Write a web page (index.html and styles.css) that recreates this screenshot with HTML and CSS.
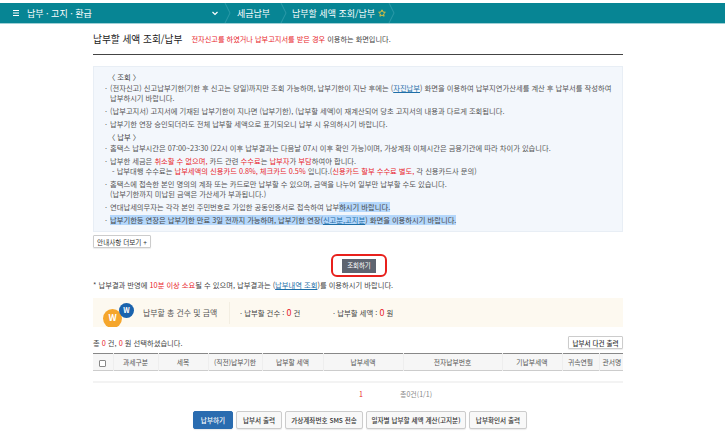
FILE: index.html
```html
<!DOCTYPE html>
<html lang="ko">
<head>
    <meta charset="UTF-8">
    <title>납부할 세액 조회/납부</title>
    <link rel="stylesheet" href="styles.css">
</head>
<body>
    <div class="topbar">
        <div class="crumb crumb-first">
            <svg class="menu-icon" width="6" height="6" viewBox="0 0 6 6"><path d="M0 .5h6M0 3h6M0 5.5h6" stroke="#fff" stroke-width="1"/></svg>
            <span>납부 · 고지 · 환급</span>
            <svg class="chev" width="6" height="5" viewBox="0 0 6 5"><path d="M.5 1l2.500 2.500L5.500 1" fill="none" stroke="#fff" stroke-width="1.2"/></svg>
        </div>
        <svg class="sep" width="7" height="20" viewBox="0 0 7 20"><path d="M1 0l5 10-5 10" fill="none" stroke="#2c9aa8" stroke-width="1"/></svg>
        <div class="crumb crumb-second">세금납부</div>
        <svg class="sep" width="7" height="20" viewBox="0 0 7 20"><path d="M1 0l5 10-5 10" fill="none" stroke="#2c9aa8" stroke-width="1"/></svg>
        <div class="crumb crumb-third">
            <span>납부할 세액 조회/납부</span>
            <svg class="star" width="8" height="8" viewBox="0 0 8 8"><path d="M4 .8l1 2.200 2.300.3-1.700 1.600.5 2.300L4 6.100 1.900 7.200l.5-2.300L.7 3.300 3 3z" fill="none" stroke="#e0c040" stroke-width="1"/></svg>
        </div>
        <svg class="sep" width="7" height="20" viewBox="0 0 7 20"><path d="M1 0l5 10-5 10" fill="none" stroke="#2c9aa8" stroke-width="1"/></svg>
    </div>

    <div class="content">
        <div class="title-row">
            <h1>납부할 세액 조회/납부</h1>
            <p><span class="red">전자신고를 하였거나 납부고지서를 받은 경우</span> 이용하는 화면입니다.</p>
        </div>

        <div class="notice">
            <div class="notice-head">〈 조회 〉</div>
            <ul>
                <li>(전자신고) 신고납부기한(기한 후 신고는 당일)까지만 조회 가능하며, 납부기한이 지난 후에는 (<a class="link">자진납부</a>) 화면을 이용하여 납부지연가산세를 계산 후 납부서를 작성하여<br>납부하시기 바랍니다.</li>
                <li>(납부고지서) 고지서에 기재된 납부기한이 지나면 (납부기한), (납부할 세액)이 재계산되어 당초 고지서의 내용과 다르게 조회됩니다.</li>
                <li>납부기한 연장 승인되더라도 전체 납부할 세액으로 표기되오니 납부 시 유의하시기 바랍니다.</li>
            </ul>
            <div class="notice-head">〈 납부 〉</div>
            <ul>
                <li>홈택스 납부시간은 07:00~23:30 (22시 이후 납부결과는 다음날 07시 이후 확인 가능)이며, 가상계좌 이체시간은 금융기관에 따라 차이가 있습니다.</li>
                <li>납부한 세금은 <span class="red">취소할 수 없으며,</span> 카드 관련 <span class="red">수수료</span>는 <span class="red">납부자</span>가 <span class="red">부담</span>하여야 합니다.<br>&nbsp;- 납부대행 수수료는 <span class="red">납부세액의 신용카드 0.8%, 체크카드 0.5%</span> 입니다.(<span class="red">신용카드 할부 수수료 별도,</span> 각 신용카드사 문의)</li>
                <li>홈택스에 접속한 본인 명의의 계좌 또는 카드로만 납부할 수 있으며, 금액을 나누어 일부만 납부할 수도 있습니다.<br>(납부기한까지 미납된 금액은 가산세가 부과됩니다.)</li>
                <li>연대납세의무자는 각각 본인 주민번호로 가입한 공동인증서로 접속하여 납부<mark>하시기 바랍니다.</mark></li>
                <li><mark>납부기한등 연장은 납부기한 만료 3일 전까지 가능하며, 납부기한 연장(<a class="link">신고분,고지분</a>) 화면을 이용하시기 바랍니다.</mark></li>
            </ul>
        </div>

        <button class="btn btn-more">안내사항 더보기 +</button>

        <div class="search-row">
            <div class="search-ring"><button class="btn-dark">조회하기</button></div>
        </div>

        <p class="result-note">* 납부결과 반영에 <span class="red">10분 이상 소요</span>될 수 있으며, 납부결과는 (<a class="link">납부내역 조회</a>)를 이용하시기 바랍니다.</p>

        <div class="summary">
            <div class="logo">
                <span class="logo-big">W</span>
                <span class="logo-small">W</span>
            </div>
            <div class="summary-title">납부할 총 건수 및 금액</div>
            <div class="summary-item summary-count">· 납부할 건수 : <b class="red">0</b> 건</div>
            <div class="summary-item summary-amount">· 납부할 세액 : <b class="red">0</b> 원</div>
        </div>

        <div class="select-row">
            <span>총 <span class="red">0</span> 건, <span class="red">0</span> 원 선택하셨습니다.</span>
            <button class="btn btn-print">납부서 다건 출력</button>
        </div>

        <table class="tax-table">
            <thead>
                <tr>
                    <th class="col-check"><span class="checkbox"></span></th>
                    <th class="col-type">과세구분</th>
                    <th class="col-item">세목</th>
                    <th class="col-date">(직전)납부기한</th>
                    <th class="col-due">납부할 세액</th>
                    <th class="col-tax">납부세액</th>
                    <th class="col-no">전자납부번호</th>
                    <th class="col-paid">기납부세액</th>
                    <th class="col-year">귀속연월</th>
                    <th class="col-office">관서명</th>
                </tr>
            </thead>
        </table>
        <div class="table-empty"></div>

        <div class="paging">
            <a class="page-no">1</a>
            <span class="page-total">총0건(1/1)</span>
        </div>

        <div class="actions">
            <button class="btn btn-action btn-primary">납부하기</button>
            <button class="btn btn-action btn-w46">납부서 출력</button>
            <button class="btn btn-action btn-w78">가상계좌번호 SMS 전송</button>
            <button class="btn btn-action btn-w100">일자별 납부할 세액 계산(고지분)</button>
            <button class="btn btn-action btn-w58">납부확인서 출력</button>
        </div>
    </div>
</body>
</html>
```

FILE: styles.css
```css
* {
    margin: 0;
    padding: 0;
    box-sizing: border-box;
}

body {
    width: 725px;
    height: 434px;
    overflow: hidden;
    background: #fff;
    font-family: "Noto Sans CJK KR", "Noto Sans", sans-serif;
    color: #444;
    font-size: 7px;
    padding-top: 3px;
}

.red {
    color: #e8262c;
}

.link {
    color: #1f6fa8;
    text-decoration: underline;
}

.topbar {
    display: flex;
    align-items: center;
    height: 21px;
    background: #078594;
    border-bottom: 1px solid #9fd0d6;
    color: #fff;
    font-size: 9px;
}

.crumb {
    display: flex;
    align-items: center;
    white-space: nowrap;
}

.crumb-first {
    width: 224px;
    padding-left: 13px;
}

.menu-icon {
    margin-right: 8px;
}

.chev {
    margin-left: auto;
    margin-right: 6px;
}

.sep {
    flex: none;
}

.crumb-second {
    width: 49px;
    padding-left: 6px;
}

.crumb-third {
    width: 101px;
    padding-left: 5px;
    gap: 3px;
}

.content {
    width: 530px;
    margin-left: 93px;
}

.title-row {
    display: flex;
    align-items: center;
    height: 31px;
    border-bottom: 1px solid #444;
    gap: 9px;
    white-space: nowrap;
}

.title-row h1 {
    font-size: 9.7px;
    font-weight: 400;
    color: #222;
}

.title-row p {
    font-size: 7.2px;
}

.notice {
    margin-top: 11px;
    height: 166px;
    background: #f3f7fc;
    border: 1px solid #e8eef5;
    padding: 5px 6px 0 11px;
    font-size: 7.3px;
    line-height: 10px;
    color: #555;
}

.notice-head {
    padding: 0 3px;
    margin-bottom: 1px;
    color: #444;
}

.notice ul {
    list-style: none;
    margin-bottom: 2px;
}

.notice li {
    padding-left: 5px;
    margin-bottom: 3px;
    position: relative;
    white-space: nowrap;
}

.notice li::before {
    content: "·";
    position: absolute;
    left: 0;
}

mark {
    background: #b4d7fb;
    color: #444;
}

.btn {
    background: #fff;
    border: 1px solid #ccc;
    color: #333;
    font-family: inherit;
    font-size: 6.6px;
    border-radius: 1px;
    box-shadow: 0 1px 1px rgba(0,0,0,0.08);
    white-space: nowrap;
}

.btn-more {
    display: block;
    width: 58px;
    height: 13px;
    margin-top: 3px;
}

.search-row {
    display: flex;
    justify-content: center;
    margin-top: 6px;
    padding-left: 2px;
}

.search-ring {
    display: flex;
    align-items: center;
    justify-content: center;
    width: 56px;
    height: 23px;
    border: 2px solid #e8201c;
    border-radius: 6px;
}

.btn-dark {
    width: 34px;
    height: 14px;
    background: #5e6470;
    border: none;
    color: #fff;
    font-family: inherit;
    font-size: 6.4px;
}

.result-note {
    margin-top: 3px;
    font-size: 7.3px;
    line-height: 10px;
    white-space: nowrap;
}

.summary {
    display: flex;
    align-items: center;
    height: 29px;
    margin-top: 8px;
    background: #fdf9f0;
}

.logo {
    width: 50px;
    height: 29px;
    position: relative;
    overflow: hidden;
    flex: none;
}

.logo-big {
    position: absolute;
    left: 10px;
    top: 11px;
    width: 19px;
    height: 19px;
    border-radius: 50%;
    background: #f5a62c;
    color: #fff;
    font-size: 9px;
    font-weight: 700;
    text-align: center;
    line-height: 18px;
}

.logo-small {
    position: absolute;
    left: 26px;
    top: 5px;
    width: 15px;
    height: 15px;
    border-radius: 50%;
    background: #1a63ad;
    color: #fff;
    font-size: 7px;
    font-weight: 700;
    text-align: center;
    line-height: 14px;
}

.summary-title {
    width: 87px;
    font-size: 7.9px;
    color: #555;
    border-right: 1px solid #f3eee2;
    line-height: 22px;
    white-space: nowrap;
}

.summary-item {
    font-size: 7.4px;
    white-space: nowrap;
}

.summary-item b {
    font-size: 9px;
    font-weight: 400;
}

.summary-count {
    width: 103px;
    padding-left: 10px;
}

.select-row {
    display: flex;
    justify-content: space-between;
    align-items: center;
    height: 13px;
    margin-top: 9px;
    font-size: 7.3px;
}

.btn-print {
    width: 55px;
    height: 13px;
    font-weight: 500;
}

.tax-table {
    width: 530px;
    margin-top: 4px;
    table-layout: fixed;
    border-collapse: collapse;
    border-top: 1px solid #888;
    border-bottom: 1px solid #ccc;
    background: #f6f6f6;
}

.tax-table th {
    height: 17px;
    font-size: 6.8px;
    font-weight: 400;
    color: #555;
    border-left: 1px solid #eee;
    white-space: nowrap;
    overflow: hidden;
}

.tax-table th:first-child {
    border-left: none;
}

.col-check { width: 20px; }
.col-type { width: 45px; }
.col-item { width: 50px; }
.col-date { width: 54px; }
.col-due { width: 61px; }
.col-tax { width: 80px; }
.col-no { width: 99px; }
.col-paid { width: 60px; }
.col-year { width: 37px; }
.col-office { width: 24px; text-align: left; padding-left: 3px; }

.checkbox {
    display: inline-block;
    width: 7px;
    height: 7px;
    background: #fff;
    border: 1px solid #888;
    border-radius: 1px;
    vertical-align: middle;
}

.table-empty {
    height: 12px;
    border-bottom: 2px solid #f3f3f3;
}

.paging {
    display: flex;
    height: 22px;
    align-items: center;
    padding-left: 266px;
    color: #888;
}

.page-no {
    color: #e8262c;
    font-size: 7px;
    width: 41px;
}

.actions {
    display: flex;
    gap: 3px;
    margin-top: 6px;
    padding-left: 100px;
}

.btn-action {
    height: 18px;
    background: #f8f8f8;
    font-weight: 500;
    border-radius: 2px;
}

.btn-primary {
    width: 40px;
    background: #2a6cb0;
    border-color: #2a6cb0;
    color: #fff;
}

.btn-w46 { width: 46px; }
.btn-w78 { width: 78px; }
.btn-w100 { width: 100px; }
.btn-w58 { width: 58px; }
```
